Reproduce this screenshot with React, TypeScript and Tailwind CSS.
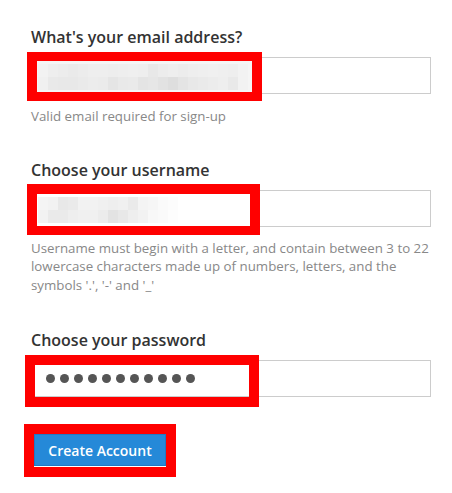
import React from "react";

// ─── Redacted (pixelated) blocks ──────────────────────────────────────────────
const EMAIL_PIXELS = [
  ["#f2f2f2", "#eeeeee", "#ececec", "#eaeaea", "#ececec", "#eeeeee", "#eeeeee", "#ededed", "#eeeeee", "#efefef", "#eeeeee", "#e8e8e8", "#ececec", "#eeeeee", "#ececec", "#eeeeee", "#efefef", "#f0f0f0", "#efefef", "#eeeeee", "#f2f2f2"],
  ["#f0f0f0", "#e9e9e9", "#e8e8e8", "#e8e8e8", "#eaeaea", "#ececec", "#ebebeb", "#e5e5e5", "#e9e9e9", "#eaeaea", "#e4e4e4", "#e6e6e6", "#e2e2e2", "#dedede", "#e4e4e4", "#e8e8e8", "#eaeaea", "#ececec", "#eeeeee", "#e9e9e9", "#f2f2f2"],
];

const USER_PIXELS = [
  ["#f4f4f4", "#f2f2f2", "#e8e8e8", "#eaeaea", "#f2f2f2", "#f2f2f2", "#f0f0f0", "#eeeeee", "#f0f0f0", "#eaeaea", "#f4f4f4", "#f6f6f6", "#fafafa", "#fcfcfc"],
  ["#f2f2f2", "#eaeaea", "#eaeaea", "#eeeeee", "#f0f0f0", "#f0f0f0", "#ececec", "#e3e3e3", "#e8e8e8", "#eeeeee", "#f2f2f2", "#f8f8f8", "#fafafa", "#fdfdfd"],
];

function Pixels({ rows }: { rows: string[][] }) {
  return (
    <div className="flex flex-col">
      {rows.map((row, r) => (
        <div key={r} className="flex h-[13px]">
          {row.map((c, i) => (
            <div key={i} className="w-[10px] h-full" style={{ backgroundColor: c }} />
          ))}
        </div>
      ))}
    </div>
  );
}

function Label({ children }: { children: React.ReactNode }) {
  return (
    <label className="block text-[16px] leading-[22px] font-semibold text-[#333333]">
      {children}
    </label>
  );
}

function Hint({ children, className = "" }: { children: React.ReactNode; className?: string }) {
  return <p className={`text-[13.3px] leading-[18.5px] text-[#888888] ${className}`}>{children}</p>;
}

export default function App() {
  return (
    <div
      className="min-h-screen bg-white pt-[26px] pl-[31px]"
      style={{ fontFamily: "'Open Sans', 'Noto Sans', sans-serif" }}
    >
      <div className="w-[400px] flex flex-col">
        {/* Email */}
        <Label>What's your email address?</Label>
        <div className="relative mt-[9px] h-[37px] border border-[#cccccc] bg-white">
          <div className="absolute left-[-5px] top-[-6px] w-[235px] h-[49px] border-[10px] border-t-[9px] border-b-[9px] border-[#ff0000] bg-[#f5f5f5] pt-[3px] pl-[1px]">
            <Pixels rows={EMAIL_PIXELS} />
          </div>
        </div>
        <Hint className="mt-[13px]">Valid email required for sign-up</Hint>

        {/* Username */}
        <div className="mt-[33px]">
          <Label>Choose your username</Label>
        </div>
        <div className="relative mt-[9px] h-[37px] border border-[#cccccc] bg-white">
          <div className="absolute left-[-5px] top-[-7px] w-[233px] h-[51px] border-[10px] border-b-[9px] border-[#ff0000] bg-white pt-[3px] pl-[1px]">
            <Pixels rows={USER_PIXELS} />
          </div>
        </div>
        <Hint className="mt-[12px]">
          Username must begin with a letter, and contain between 3 to 22 lowercase characters made up of
          numbers, letters, and the symbols '.', '-' and '_'
        </Hint>

        {/* Password */}
        <div className="mt-[35px]">
          <Label>Choose your password</Label>
        </div>
        <div className="relative mt-[9px] h-[37px] border border-[#cccccc] bg-white flex items-center pl-[14px] gap-[5px]">
          {Array.from({ length: 11 }).map((_, i) => (
            <span key={i} className="w-[9px] h-[9px] rounded-full bg-[#555555]" />
          ))}
          <div className="absolute left-[-7px] top-[-6px] w-[234px] h-[52px] border-[10px] border-[#ff0000]" />
        </div>

        {/* Submit */}
        <div className="relative mt-[37px] ml-[3px] self-start">
          <button className="h-[32px] w-[132px] bg-[#2589d8] border border-[#1f78c4] text-white text-[14px] font-semibold">
            Create Account
          </button>
          <div className="absolute left-[-10px] top-[-10px] w-[152px] h-[53px] border-[10px] border-[#ff0000]" />
        </div>
      </div>
    </div>
  );
}
